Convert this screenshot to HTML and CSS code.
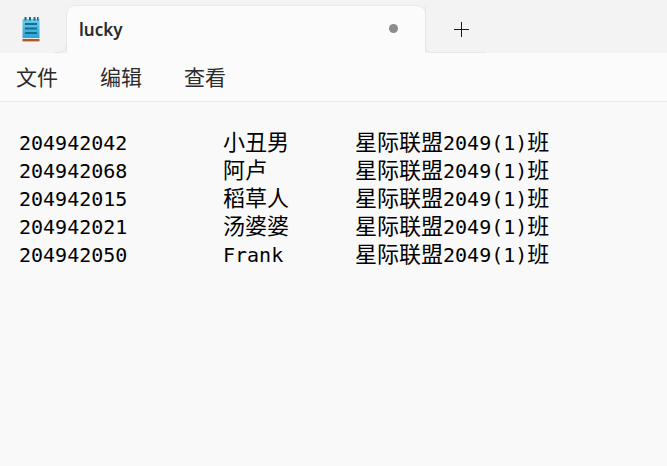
FILE: index.html
```html
<!DOCTYPE html>
<html lang="zh">
<head>
<meta charset="utf-8">
<title>lucky</title>
<link rel="stylesheet" href="styles.css">
</head>
<body>
<div class="titlebar">
  <div class="app-icon">
    <svg width="18" height="26" viewBox="0 0 18 26">
      <defs><linearGradient id="g" x1="0" y1="0" x2="0" y2="1"><stop offset="0" stop-color="#6fcbeb"/><stop offset="1" stop-color="#2ba3d6"/></linearGradient></defs>
      <rect x="0.5" y="3" width="17" height="19" fill="url(#g)"/>
      <rect x="0.5" y="22" width="17" height="1" fill="#e6eef2"/>
      <rect x="0.5" y="23" width="17" height="2.4" fill="#b4551a"/>
      <rect x="2.5" y="1" width="2" height="3.5" fill="#0f6f93"/>
      <rect x="7" y="1" width="2" height="3.5" fill="#0f6f93"/>
      <rect x="11.5" y="1" width="2" height="3.5" fill="#0f6f93"/>
      <rect x="15" y="1" width="1.6" height="3.5" fill="#0f6f93"/>
      <rect x="3" y="7" width="12" height="2" fill="#0f6f93"/>
      <rect x="3" y="11.5" width="12" height="2" fill="#0f6f93"/>
      <rect x="3" y="16" width="12" height="2" fill="#0f6f93"/>
    </svg>
  </div>
  <div class="tab">
    <span class="tab-title">lucky</span>
    <span class="dot"></span>
  </div>
  <div class="new-tab">
    <svg width="15" height="15" viewBox="0 0 15 15"><path d="M7.5 0v15M0 7.5h15" stroke="#1a1a1a" stroke-width="1" fill="none"/></svg>
  </div>
</div>
<nav class="menubar">
  <span class="menu-item">文件</span>
  <span class="menu-item">编辑</span>
  <span class="menu-item">查看</span>
</nav>
<main class="doc">
  <div class="row"><span>204942042</span><span class="cjk">小丑男</span><span><span class="cjk">星际联盟</span>2049(1)<span class="cjk">班</span></span></div>
  <div class="row"><span>204942068</span><span class="cjk">阿卢</span><span><span class="cjk">星际联盟</span>2049(1)<span class="cjk">班</span></span></div>
  <div class="row"><span>204942015</span><span class="cjk">稻草人</span><span><span class="cjk">星际联盟</span>2049(1)<span class="cjk">班</span></span></div>
  <div class="row"><span>204942021</span><span class="cjk">汤婆婆</span><span><span class="cjk">星际联盟</span>2049(1)<span class="cjk">班</span></span></div>
  <div class="row"><span>204942050</span><span>Frank</span><span><span class="cjk">星际联盟</span>2049(1)<span class="cjk">班</span></span></div>
</main>
</body>
</html>
```
FILE: styles.css
```css
* { box-sizing: border-box; }
html, body { margin: 0; height: 100%; }
body {
  width: 667px;
  height: 466px;
  overflow: hidden;
  background: #f9f9f9;
  display: flex;
  flex-direction: column;
  color: #1a1a1a;
}
.titlebar {
  height: 53px;
  flex: none;
  background: #f3f3f3;
  display: flex;
  align-items: flex-end;
  padding-left: 22px;
}
.app-icon {
  width: 44px;
  height: 48px;
  display: flex;
  padding-top: 11px;
  position: relative;
}
.app-icon::after {
  content: "";
  position: absolute;
  right: 0;
  bottom: 0;
  width: 11px;
  height: 7px;
  border-right: 1px solid #e7e7e7;
  border-bottom: 1px solid #e7e7e7;
  border-radius: 0 0 6px 0;
}
.app-icon svg { display: block; }
.tab {
  width: 360px;
  height: 48px;
  background: #fbfbfb;
  border: 1px solid #e7e7e7;
  border-bottom: none;
  border-radius: 9px 9px 0 0;
  display: flex;
  align-items: center;
  padding: 0 27px 0 12px;
  justify-content: space-between;
}
.tab-title {
  font: 600 17px "Noto Sans", "Open Sans", sans-serif;
  color: #2a2a2a;
}
.dot {
  width: 9px;
  height: 9px;
  border-radius: 50%;
  background: #8c8c8c;
  margin-bottom: 2px;
}
.new-tab {
  width: 61px;
  height: 48px;
  margin-left: -1px;
  border-left: 1px solid #e7e7e7;
  border-bottom: 1px solid #e7e7e7;
  border-radius: 0 0 0 6px;
  display: flex;
  align-items: center;
  justify-content: center;
  padding: 2px 0 0 10px;
}
.new-tab svg { display: block; }
.menubar {
  height: 49px;
  flex: none;
  background: #fbfbfb;
  border-bottom: 1px solid #ebebeb;
  display: flex;
  align-items: center;
  gap: 42px;
  padding: 0 0 2px 16px;
  font: 21px "Noto Sans CJK SC", sans-serif;
  color: #2b2b2b;
}
.doc {
  padding-top: 27px;
  padding-left: 19px;
  font: 20px/28px "DejaVu Sans Mono", "Liberation Mono", "Noto Sans CJK SC", monospace;
  color: #000;
}
.row {
  display: grid;
  grid-template-columns: 204px 132px 1fr;
  align-items: baseline;
  height: 28px;
  white-space: nowrap;
}
.cjk {
  font: 22px/22px "Noto Sans CJK SC", sans-serif;
}
```
